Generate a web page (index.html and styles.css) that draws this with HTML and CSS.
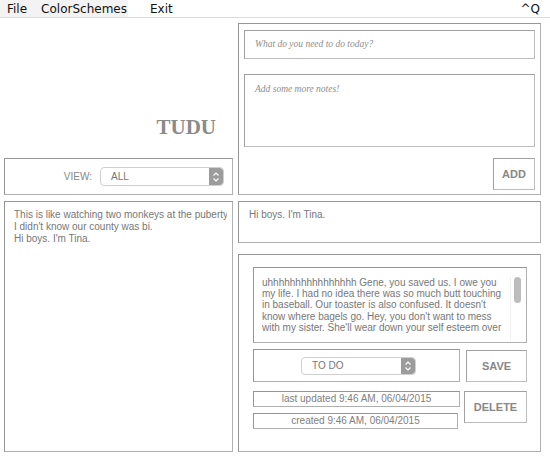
FILE: index.html
```html
<!DOCTYPE html>
<html>
<head>
<meta charset="utf-8">
<link rel="stylesheet" href="styles.css">
</head>
<body>
<div class="menubar">
  <div class="menu-left">
    <span class="menu-item m-file">File</span>
    <span class="menu-item m-colors">ColorSchemes</span>
  </div>
  <span class="menu-item m-exit">Exit</span>
  <span class="menu-item m-quit">^Q</span>
</div>
<div class="main">
  <div class="left-top">
    <div class="brand"><span class="brand-text">TUDU</span></div>
    <div class="box view-box">
      <span class="view-label">VIEW:</span>
      <div class="select view-select">
        <span class="select-text">ALL</span>
        <span class="stepper"><svg width="8" height="12" viewBox="0 0 8 12"><path d="M1.5 4.5 L4 2 L6.5 4.5 M1.5 7.5 L4 10 L6.5 7.5" fill="none" stroke="#fff" stroke-width="1.1"/></svg></span>
      </div>
    </div>
  </div>
  <div class="box add-panel">
    <div class="field title-field">What do you need to do today?</div>
    <div class="field notes-field">Add some more notes!</div>
    <div class="row-end"><div class="btn add-btn">ADD</div></div>
  </div>
  <div class="box list-box">
    <div class="list-line">This is like watching two monkeys at the puberty</div>
    <div class="list-line">I didn't know our county was bi.</div>
    <div class="list-line">Hi boys. I'm Tina.</div>
  </div>
  <div class="right-bottom">
    <div class="box title-box">Hi boys. I'm Tina.</div>
    <div class="box detail-panel">
      <div class="notes-box">
        <div class="notes-text">uhhhhhhhhhhhhhhhh Gene, you saved us. I owe you my life. I had no idea there was so much butt touching in baseball. Our toaster is also confused. It doesn't know where bagels go. Hey, you don't want to mess with my sister. She'll wear down your self esteem over time.</div>
        <div class="scroll-track"><div class="scroll-thumb"></div></div>
      </div>
      <div class="status-row">
        <div class="status-box">
          <div class="select status-select">
            <span class="select-text">TO DO</span>
            <span class="stepper"><svg width="8" height="12" viewBox="0 0 8 12"><path d="M1.5 4.5 L4 2 L6.5 4.5 M1.5 7.5 L4 10 L6.5 7.5" fill="none" stroke="#fff" stroke-width="1.1"/></svg></span>
          </div>
        </div>
        <div class="btn save-btn">SAVE</div>
      </div>
      <div class="meta-row">
        <div class="meta-col">
          <div class="meta updated">last updated 9:46 AM, 06/04/2015</div>
          <div class="meta created">created 9:46 AM, 06/04/2015</div>
        </div>
        <div class="btn delete-btn">DELETE</div>
      </div>
    </div>
  </div>
</div>
</body>
</html>
```
FILE: styles.css
```css
* { box-sizing: border-box; }
html, body { margin: 0; padding: 0; background: #fff; }
body {
  width: 550px;
  height: 470px;
  overflow: hidden;
  font-family: "Liberation Sans", Arial, sans-serif;
  color: #777;
}
.menubar {
  height: 18px;
  border-bottom: 1px solid #dcdcdc;
  display: flex;
  align-items: center;
  font-family: "DejaVu Sans", sans-serif;
  font-size: 12px;
  color: #111;
}
.menu-left {
  display: flex;
  align-items: center;
  height: 17px;
  width: 128px;
  background: #f3f3f3;
}
.m-file { margin-left: 7px; }
.m-colors { margin-left: 14px; }
.m-exit { margin-left: 22px; }
.m-quit { margin-left: auto; margin-right: 10px; }

.main {
  display: grid;
  grid-template-columns: 229px 303px;
  grid-template-rows: 172px 251px;
  column-gap: 5px;
  row-gap: 6px;
  padding: 5px 0 0 4px;
}
.box {
  border: 1px solid #959595;
  border-right-color: #b0b0b0;
  border-bottom-color: #b0b0b0;
}
.left-top {
  display: flex;
  flex-direction: column;
  gap: 6px;
}
.brand {
  flex: 1;
  display: flex;
  justify-content: flex-end;
  align-items: flex-end;
  padding: 0 17px 15px 0;
}
.brand-text {
  font-family: "Liberation Serif", serif;
  font-weight: bold;
  font-size: 21px;
  color: #8a8a8a;
  line-height: 20px;
}
.view-box {
  height: 37px;
  display: flex;
  align-items: center;
  justify-content: flex-end;
  gap: 8px;
  padding-right: 8px;
}
.view-label { font-size: 10px; color: #888; }
.select {
  display: flex;
  align-items: center;
  border: 1px solid #d0d0d0;
  border-radius: 4px;
  background: #fff;
  font-size: 10px;
  color: #777;
  overflow: hidden;
}
.select-text { flex: 1; }
.stepper {
  width: 14px;
  align-self: stretch;
  background: #9c9c9c;
  border-radius: 0 3px 3px 0;
  display: flex;
  align-items: center;
  justify-content: center;
}
.view-select { width: 124px; height: 19px; padding-left: 10px; }

.add-panel {
  display: flex;
  flex-direction: column;
  padding: 6px 5px 4px 5px;
}
.field {
  border: 1px solid #a0a0a0;
  border-right-color: #bcbcbc;
  border-bottom-color: #bcbcbc;
  font-family: "Liberation Serif", serif;
  font-style: italic;
  font-size: 9.5px;
  color: #8e8e8e;
  padding-left: 10px;
}
.title-field { height: 29px; line-height: 27px; }
.notes-field { height: 73px; margin-top: 15px; padding-top: 9px; }
.row-end { display: flex; justify-content: flex-end; margin-top: 11px; }
.btn {
  border: 1px solid #a0a0a0;
  border-right-color: #bcbcbc;
  border-bottom-color: #bcbcbc;
  display: flex;
  align-items: center;
  justify-content: center;
  font-weight: bold;
  font-size: 11px;
  color: #888;
}
.add-btn { width: 42px; height: 32px; }

.list-box {
  padding: 7px 0 0 9px;
  overflow: hidden;
}
.list-line {
  font-size: 10px;
  line-height: 12px;
  white-space: nowrap;
  overflow: hidden;
  margin-right: 5px;
}

.right-bottom {
  display: flex;
  flex-direction: column;
  gap: 11px;
}
.title-box {
  height: 42px;
  padding: 7px 10px;
  font-size: 10px;
  line-height: 12px;
}
.detail-panel {
  flex: 1;
  display: flex;
  flex-direction: column;
  padding: 12px 13px 0 14px;
}
.notes-box {
  height: 76px;
  border: 1px solid #959595;
  border-right-color: #b0b0b0;
  border-bottom-color: #b0b0b0;
  display: flex;
  padding: 9px 3px 2px 8px;
  gap: 4px;
}
.notes-text {
  flex: 1;
  height: 56px;
  overflow: hidden;
  font-size: 10px;
  line-height: 11.2px;
  color: #777;
}
.scroll-track {
  width: 13px;
  display: flex;
  justify-content: center;
  padding-top: 0;
  border-left: 1px solid #f0f0f0;
}
.scroll-thumb {
  width: 7px;
  height: 26px;
  border-radius: 4px;
  background: #bdbdbd;
}
.status-row {
  display: flex;
  gap: 6px;
  margin-top: 6px;
  height: 33px;
}
.status-box {
  width: 207px;
  border: 1px solid #959595;
  border-right-color: #b0b0b0;
  border-bottom-color: #b0b0b0;
  display: flex;
  align-items: center;
  justify-content: center;
}
.status-select { width: 115px; height: 18px; padding-left: 10px; margin-left: 4px; }
.save-btn { width: 61px; margin-top: 1px; }
.meta-row {
  display: flex;
  gap: 4px;
  margin-top: 9px;
}
.meta-col { display: flex; flex-direction: column; gap: 6px; width: 207px; }
.meta {
  height: 16px;
  border: 1px solid #959595;
  border-right-color: #b0b0b0;
  border-bottom-color: #b0b0b0;
  font-size: 10px;
  line-height: 14px;
  text-align: center;
  color: #808080;
}
.created { width: 205px; }
.delete-btn { width: 63px; height: 32px; }
```
